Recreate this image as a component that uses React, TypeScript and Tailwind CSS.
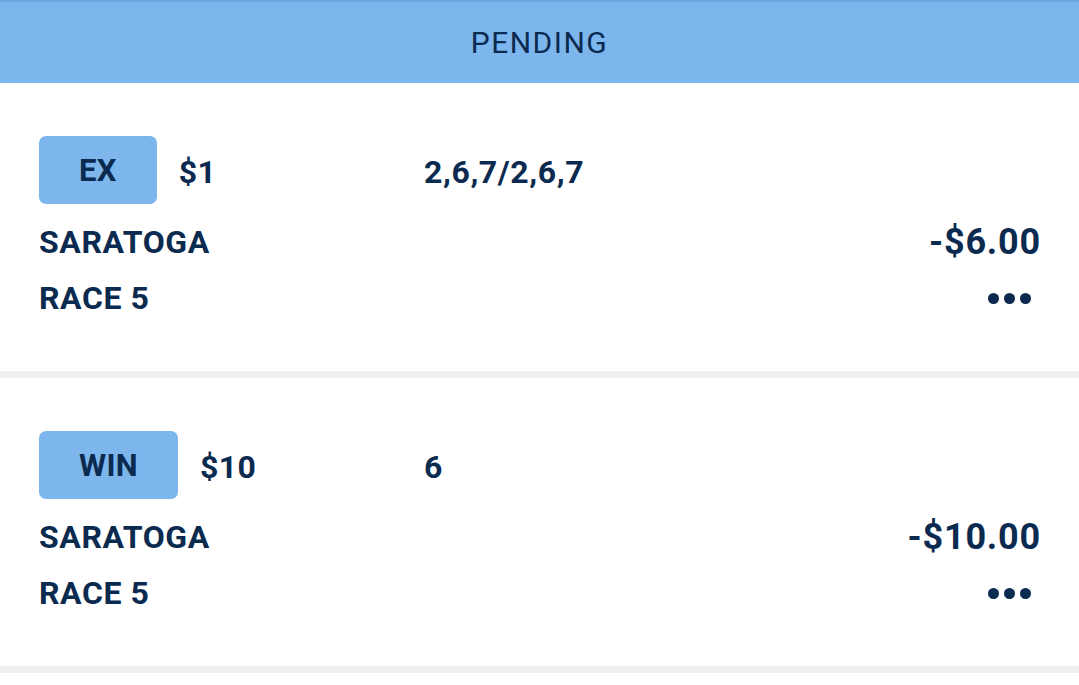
import React from 'react';

interface Bet {
  type: string;
  amount: string;
  selection: string;
  track: string;
  race: string;
  cost: string;
}

const bets: Bet[] = [
  { type: 'EX', amount: '$1', selection: '2,6,7/2,6,7', track: 'SARATOGA', race: 'RACE 5', cost: '-$6.00' },
  { type: 'WIN', amount: '$10', selection: '6', track: 'SARATOGA', race: 'RACE 5', cost: '-$10.00' },
];

function BetCard({ bet }: { bet: Bet }) {
  return (
    <div className="bg-white pl-[39px] pr-[39px] pt-[53px] pb-[45px]">
      {/* Top row: type badge, stake, runners */}
      <div className="flex items-center h-[68px]">
        <div className="flex items-center w-[385px]">
          <div className="h-[68px] px-[40px] pt-[3px] flex items-center rounded-[7px] bg-[#7cb6ec] text-[31px] font-bold tracking-[0.3px]">
            {bet.type}
          </div>
          <div className="ml-[22px] pt-[3px] text-[32px] font-bold tracking-[0.4px]">{bet.amount}</div>
        </div>
        <div className="pt-[3px] text-[32px] font-bold tracking-[0.6px]">{bet.selection}</div>
      </div>

      <div className="mt-[10px] flex items-center justify-between h-[56px]">
        <div className="text-[32px] font-bold tracking-[0.6px]">{bet.track}</div>
        <div className="mr-[-1px] text-[36px] font-bold tracking-[0.8px]">{bet.cost}</div>
      </div>

      <div className="flex items-center justify-between h-[56px]">
        <div className="text-[32px] font-bold tracking-[0.6px]">{bet.race}</div>
        <div className="flex items-center gap-[5px] mr-[9px]">
          <span className="w-[11px] h-[11px] rounded-full bg-[#0b2a4f]" />
          <span className="w-[11px] h-[11px] rounded-full bg-[#0b2a4f]" />
          <span className="w-[11px] h-[11px] rounded-full bg-[#0b2a4f]" />
        </div>
      </div>
    </div>
  );
}

export default function App() {
  return (
    <div className="min-h-screen bg-white text-[#0b2a4f] font-['Roboto',sans-serif]">
      <div className="h-[83px] flex items-center justify-center bg-[#7cb6ec] border-t-2 border-[#6ea7df]">
        <span className="text-[30px] tracking-[1.5px]">PENDING</span>
      </div>
      {bets.map((bet, i) => (
        <div key={i}>
          <BetCard bet={bet} />
          <div className="h-[7px] bg-[#efefef]" />
        </div>
      ))}
    </div>
  );
}
